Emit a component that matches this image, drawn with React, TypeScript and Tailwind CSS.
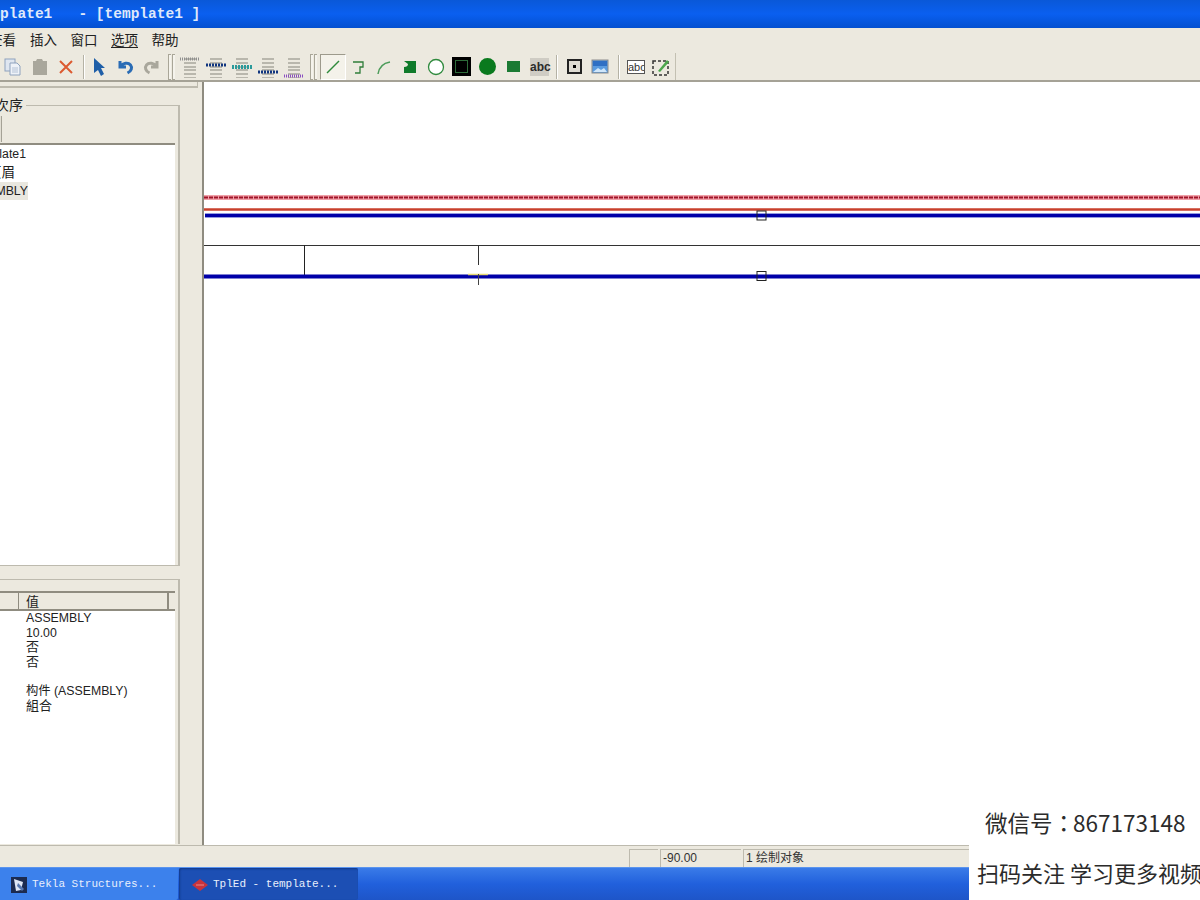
const sans = "font-['Liberation_Sans','Noto_Sans_CJK_SC',sans-serif]";

const menus = ["插入", "窗口", "选项", "帮助"];

function Cell({ children, w = 26, pressed = false }: { children: React.ReactNode; w?: number; pressed?: boolean }) {
  return (
    <div
      style={{ width: w }}
      className={`h-[26px] shrink-0 flex items-center justify-center ${pressed ? "border border-t-[#9d9a8c] border-l-[#9d9a8c] border-r-white border-b-white bg-[#f4f2ea]" : ""}`}
    >
      {children}
    </div>
  );
}

function Sep({ w }: { w: number }) {
  return (
    <div style={{ width: w }} className="h-[24px] shrink-0 flex justify-center">
      <div className="w-[2px] h-full border-l border-r border-l-[#b5b2a5] border-r-white" />
    </div>
  );
}

function Grip({ w }: { w: number }) {
  return (
    <div style={{ width: w }} className="h-[26px] shrink-0 flex justify-center gap-[1px]">
      <div className="w-[3px] h-full border-l border-t border-b border-[#a9a698] bg-[#f5f3ec]" />
      <div className="w-[3px] h-full border-l border-t border-b border-[#a9a698] bg-[#f5f3ec]" />
    </div>
  );
}

function Rows({ bars }: { bars: string }) {
  // text-align style buttons, grey rules with one dotted coloured band
  const ys = [3, 7, 11, 14, 18, 22];
  return (
    <svg width="22" height="22" viewBox="0 0 22 22">
      {ys.map((y) => (
        <line key={y} x1="5" x2="17" y1={y} y2={y} stroke="#a8a69c" strokeWidth="1.5" />
      ))}
      {bars === "a" && <line x1="1" x2="21" y1="3" y2="3" stroke="#8f8f8f" strokeWidth="3" strokeDasharray="1 1" />}
      {bars === "b" && <line x1="1" x2="21" y1="9" y2="9" stroke="#10357f" strokeWidth="3" strokeDasharray="2 1" />}
      {bars === "c" && <line x1="1" x2="21" y1="11" y2="11" stroke="#2b9a9a" strokeWidth="4" strokeDasharray="2 1" />}
      {bars === "d" && <line x1="1" x2="21" y1="16" y2="16" stroke="#10357f" strokeWidth="3" strokeDasharray="2 1" />}
      {bars === "e" && <line x1="1" x2="21" y1="20" y2="20" stroke="#8a4fc0" strokeWidth="3" strokeDasharray="1 1" />}
    </svg>
  );
}

function Toolbar() {
  return (
    <div className="h-[30px] flex items-center pl-0 pt-[1px] bg-[#ece9df] border-b-2 border-[#a5a296] overflow-hidden">
      <Cell>
        <svg width="20" height="20" viewBox="0 0 20 20">
          <rect x="2" y="2" width="10" height="12" fill="#dfe6f0" stroke="#8ea2bd" />
          <path d="M7 6h7l3 3v9H7z" fill="#eef2f8" stroke="#8ea2bd" />
          <path d="M9 11h6M9 13h6M9 15h6" stroke="#b4c2d6" />
        </svg>
      </Cell>
      <Cell w={27}>
        <svg width="20" height="20" viewBox="0 0 20 20">
          <path d="M3 4h3l1-2h5l1 2h4v14H3z" fill="#a9a79c" />
        </svg>
      </Cell>
      <Cell>
        <svg width="18" height="18" viewBox="0 0 18 18">
          <path d="M3 3l12 12M15 3L3 15" stroke="#dc5a30" strokeWidth="2" />
        </svg>
      </Cell>
      <Sep w={9} />
      <Cell w={24}>
        <svg width="18" height="20" viewBox="0 0 18 20">
          <path d="M3 1l11 10h-4l3 6-3 2-3-6-4 3z" fill="#1f5fa8" />
        </svg>
      </Cell>
      <Cell>
        <svg width="20" height="20" viewBox="0 0 20 20">
          <path d="M5 4v6h6M5.5 9.5C8 6 13 5 15.5 8c2 2.500 1 6-3 8" fill="none" stroke="#2a6cb5" strokeWidth="3" />
        </svg>
      </Cell>
      <Cell w={27}>
        <svg width="20" height="20" viewBox="0 0 20 20">
          <path d="M15 4v6H9M14.500 9.500C12 6 7 5 4.500 8c-2 2.500-1 6 3 8" fill="none" stroke="#a9a79c" strokeWidth="3" />
        </svg>
      </Cell>
      <Grip w={12} />
      <Cell><Rows bars="a" /></Cell>
      <Cell><Rows bars="b" /></Cell>
      <Cell><Rows bars="c" /></Cell>
      <Cell><Rows bars="d" /></Cell>
      <Cell><Rows bars="e" /></Cell>
      <Grip w={13} />
      <Cell pressed>
        <svg width="18" height="18" viewBox="0 0 18 18">
          <path d="M3 15L15 3" stroke="#2f8a3d" strokeWidth="1.500" />
        </svg>
      </Cell>
      <Cell w={25}>
        <svg width="18" height="18" viewBox="0 0 18 18">
          <path d="M3 4h10v5h-3v6H5" fill="none" stroke="#2f7d3a" strokeWidth="1.300" />
        </svg>
      </Cell>
      <Cell>
        <svg width="18" height="18" viewBox="0 0 18 18">
          <path d="M3 16C4 9 9 5 15 4" fill="none" stroke="#4c9c5a" strokeWidth="1.500" />
        </svg>
      </Cell>
      <Cell>
        <svg width="16" height="16" viewBox="0 0 16 16">
          <path d="M2 2h12v12H2V8q4 0 4-3z" fill="#0f7a2a" />
        </svg>
      </Cell>
      <Cell>
        <svg width="20" height="20" viewBox="0 0 20 20">
          <circle cx="10" cy="10" r="7.500" fill="#fff" stroke="#2f8a3d" strokeWidth="1.300" />
        </svg>
      </Cell>
      <Cell w={25}>
        <div className="w-[19px] h-[19px] bg-black border-[3px] border-black flex items-center justify-center">
          <div className="w-[13px] h-[13px] border border-[#2d6b38] bg-black" />
        </div>
      </Cell>
      <Cell>
        <div className="w-[17px] h-[17px] rounded-full bg-[#0a7a1e]" />
      </Cell>
      <Cell>
        <div className="w-[13px] h-[11px] bg-[#1b7a33]" />
      </Cell>
      <Cell w={27}>
        <div className={`w-[19px] h-[18px] bg-[#cfccc4] text-[12px] font-bold leading-[18px] text-center text-[#2b2b2b] ${sans}`}>abc</div>
      </Cell>
      <Sep w={8} />
      <Cell>
        <div className="w-[15px] h-[15px] border-2 border-[#222] bg-[#dedbd2] flex items-center justify-center">
          <div className="w-[3px] h-[3px] bg-black" />
        </div>
      </Cell>
      <Cell>
        <svg width="18" height="16" viewBox="0 0 18 16">
          <rect x="1" y="1" width="16" height="13" fill="#5a9be0" stroke="#8b8b8b" />
          <rect x="2" y="2" width="14" height="5" fill="#2f6fc4" />
          <path d="M2 13l5-4 3 2 3-2 3 4z" fill="#cfe6fa" />
        </svg>
      </Cell>
      <Sep w={11} />
      <Cell w={24}>
        <div className={`w-[18px] h-[14px] bg-white border border-[#555] text-[11px] leading-[12px] overflow-hidden whitespace-nowrap text-[#333] ${sans}`}>abc</div>
      </Cell>
      <Cell>
        <svg width="20" height="20" viewBox="0 0 20 20">
          <rect x="2" y="4" width="15" height="14" fill="none" stroke="#333" strokeWidth="1.500" strokeDasharray="3 2" />
          <path d="M7 14L16 3l2 2-9 10z" fill="#4ca64c" />
        </svg>
      </Cell>
      <div className="ml-[1px] w-[1px] h-[28px] bg-[#c3c0b2]" />
    </div>
  );
}

function LeftPanel() {
  return (
    <div className={`w-[204px] shrink-0 bg-[#ece9df] border-r-2 border-[#8f8c80] flex flex-col text-[12.300px] text-[#222] ${sans}`}>
      <div className="h-[6px] w-[198px] border-b-2 border-r border-[#bdbaae]" />
      {/* 次序 group */}
      <div className="relative mt-[17px] w-[180px] h-[461px] border-t border-r-2 border-b border-[#bdbaae]">
        <div className="absolute -top-[10px] left-0 bg-[#ece9df] pr-[3px] w-[26px] flex justify-end text-[14px] leading-[18px] overflow-hidden whitespace-nowrap">
          <span>次序</span>
        </div>
        <div className="h-[37px] pt-[10px]">
          <div className="w-[2px] h-[26px] bg-[#e2dfd4] border-r border-[#a5a296]" />
        </div>
        <div className="w-[175px] h-[422px] bg-white border-t-2 border-[#8f8c80] pt-[1px]">
          <div className="h-[18px] leading-[16px] w-[26px] flex justify-end overflow-hidden whitespace-nowrap"><span>template1</span></div>
          <div className="h-[18px] leading-[18px] w-[15px] flex justify-end overflow-hidden whitespace-nowrap text-[13.500px]"><span>页眉</span></div>
          <div className="h-[18px] leading-[18px] w-[28px] flex justify-end overflow-hidden whitespace-nowrap bg-[#e9e7df]"><span>ASSEMBLY</span></div>
        </div>
      </div>
      {/* property group */}
      <div className="mt-[13px] w-[180px] h-[265px] border-t border-r-2 border-[#bdbaae] pt-[11px]">
        <div className="w-[175px] h-[253px] bg-white">
          <div className="h-[20px] flex bg-[#ece9df] border-t-2 border-b-2 border-[#8f8c80] text-[13px] leading-[17px]">
            <div className="w-[19px] border-r border-[#8f8c80]" />
            <div className="w-[150px] border-r-2 border-[#8f8c80] pl-[7px]">值</div>
          </div>
          <div className="pl-[26px] leading-[14.600px]">
            <div className="h-[14.600px]">ASSEMBLY</div>
            <div className="h-[14.600px]">10.00</div>
            <div className="h-[14.600px] text-[13px]">否</div>
            <div className="h-[14.600px] text-[13px]">否</div>
            <div className="h-[14.600px]" />
            <div className="h-[14.600px]">构件 (ASSEMBLY)</div>
            <div className="h-[14.600px] text-[13px]">組合</div>
          </div>
        </div>
      </div>
    </div>
  );
}

function Drawing() {
  return (
    <svg className="absolute inset-0 w-full h-full" viewBox="0 0 996 763" preserveAspectRatio="none">
      <line x1="0" x2="996" y1="115.500" y2="115.500" stroke="#f0a0a8" strokeWidth="5" />
      <line x1="0" x2="996" y1="115.500" y2="115.500" stroke="#a01428" strokeWidth="2" strokeDasharray="4 1" />
      <line x1="0" x2="996" y1="127.500" y2="127.500" stroke="#c8402c" strokeWidth="2.500" />
      <line x1="1" x2="996" y1="133.500" y2="133.500" stroke="#c8d0f4" strokeWidth="5" />
      <line x1="1" x2="996" y1="133.500" y2="133.500" stroke="#0000a8" strokeWidth="3.500" />
      <line x1="0" x2="996" y1="163.500" y2="163.500" stroke="#333" strokeWidth="1" />
      <line x1="100.500" x2="100.500" y1="163" y2="193" stroke="#222" strokeWidth="1" />
      <line x1="274.500" x2="274.500" y1="163" y2="183" stroke="#333" strokeWidth="1" />
      <line x1="0" x2="996" y1="194.500" y2="194.500" stroke="#0000a8" strokeWidth="4" />
      <line x1="264" x2="284" y1="192.500" y2="192.500" stroke="#e6d870" strokeWidth="1.500" />
      <line x1="274.500" x2="274.500" y1="192" y2="203" stroke="#444" strokeWidth="1" />
      <rect x="553" y="129" width="9" height="9" fill="none" stroke="#222" />
      <rect x="553" y="189.500" width="9" height="9" fill="none" stroke="#222" />
    </svg>
  );
}

export default function App() {
  return (
    <div className={`relative w-[1200px] h-[900px] overflow-hidden bg-[#ece9df] flex flex-col ${sans}`}>
      {/* title bar */}
      <div className="h-[28px] shrink-0 bg-gradient-to-b from-[#0a58d8] via-[#0a5ff0] to-[#0450d0] overflow-hidden">
        <div className="-ml-[26px] pt-[4px] text-[14.500px] leading-[20px] font-bold text-[#dfe8fa] whitespace-pre font-['Liberation_Mono',monospace]">
          {"template1   - [template1 ]"}
        </div>
      </div>
      {/* menu */}
      <div className="h-[24px] shrink-0 flex items-center pt-[2px] text-[13.500px] text-[#222] bg-[#ece9df]">
        <div className="w-[16px] flex justify-end overflow-hidden whitespace-nowrap"><span>查看</span></div>
        <div className="flex gap-[13.500px] ml-[14px]">
          {menus.map((m) => (
            <span key={m} className={m === "选项" ? "underline underline-offset-2" : ""}>{m}</span>
          ))}
        </div>
      </div>
      <Toolbar />
      {/* main */}
      <div className="flex h-[763px] shrink-0">
        <LeftPanel />
        <div className="relative flex-1 bg-white">
          <Drawing />
        </div>
      </div>
      {/* status bar */}
      <div className="h-[22px] shrink-0 border-t border-[#bdbaae] bg-[#ece9df] flex items-center pt-[2px] pl-[629px] gap-[2px] text-[12px] text-[#333]">
        <div className="w-[29px] h-[18px] border-l border-t border-[#bdbaae]" />
        <div className="w-[81px] h-[18px] border-l border-t border-[#bdbaae] pl-[2px] leading-[17px]">-90.00</div>
        <div className="flex-1 h-[18px] border-l border-t border-[#bdbaae] pl-[2px] leading-[17px]">1 绘制对象</div>
      </div>
      {/* taskbar */}
      <div className="flex-1 flex bg-gradient-to-b from-[#3a7be8] via-[#2160dc] to-[#1e55c8] border-t border-[#5a94ee] text-[11px] text-[#e8effc] font-['Liberation_Mono','Noto_Sans_CJK_SC',monospace]">
        <div className="w-[178px] flex items-center gap-[4px] pl-[10px] pt-[1px] bg-[#3c81ec] rounded-r-[2px]">
          <svg width="18" height="18" viewBox="0 0 18 18" className="shrink-0">
            <rect x="1" y="1" width="16" height="16" fill="#1c2b50" />
            <path d="M4 3l9 3-2 8-5 1z" fill="#dfe6f4" />
            <path d="M8 7l6 6-2 2-5-5z" fill="#5878b0" />
          </svg>
          <span className="whitespace-nowrap">Tekla Structures...</span>
        </div>
        <div className="w-[179px] ml-[1px] flex items-center gap-[5px] pl-[13px] pt-[1px] bg-[#1c4fb4] rounded-[2px] shadow-[inset_1px_1px_2px_#123a8a]">
          <svg width="16" height="12" viewBox="0 0 16 12" className="shrink-0">
            <path d="M8 0l8 6-8 6-8-6z" fill="#c8343c" />
            <path d="M4 6h8" stroke="#e88" strokeWidth="1" />
          </svg>
          <span className="whitespace-nowrap">TplEd - template...</span>
        </div>
      </div>
      {/* watermark */}
      <div className="absolute left-[969px] top-[800px] w-[231px] h-[100px] bg-white overflow-hidden font-['Noto_Sans_CJK_SC',sans-serif] text-[#2b2b2b] whitespace-nowrap">
        <div className="pl-[16px] mt-[5px] text-[22.500px] leading-[34px]">
          微信号<span className="mr-[-2px] font-['Noto_Sans_CJK_TC',sans-serif]">：</span>867173148
        </div>
        <div className="pl-[8px] mt-[17px] text-[22px] leading-[32px]">扫码关注 学习更多视频</div>
      </div>
    </div>
  );
}
